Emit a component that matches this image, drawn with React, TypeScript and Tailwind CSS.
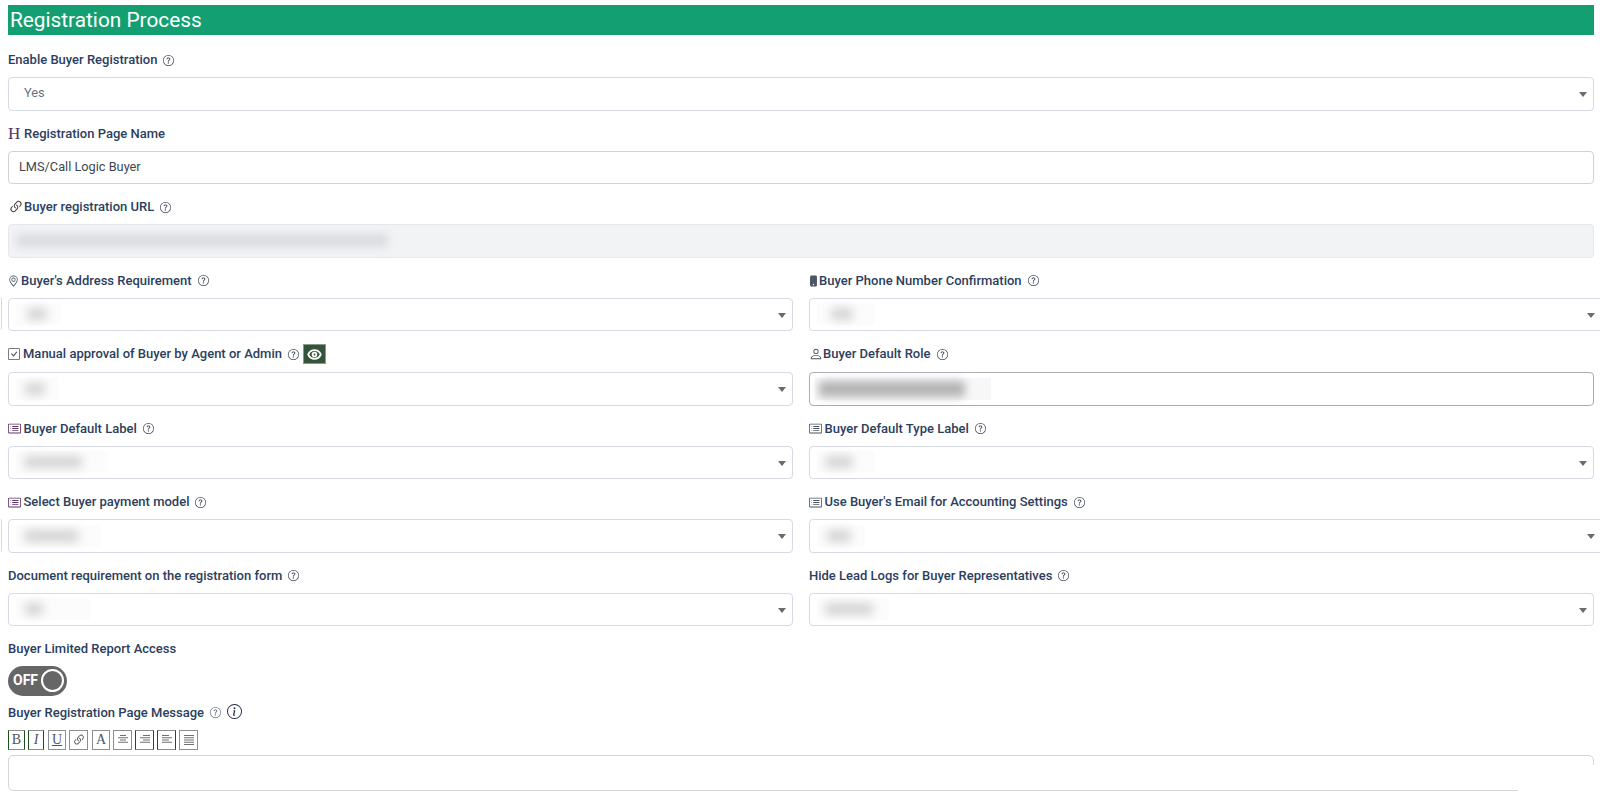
import type { ReactNode } from "react"
import {
  BsCardList,
  BsCheckSquare,
  BsGeoAlt,
  BsInfoCircle,
  BsLink45Deg,
  BsPerson,
  BsPhoneFill,
  BsQuestionCircle,
} from "react-icons/bs"
import { Eye } from "lucide-react"

const labelText = "flex h-4 items-center whitespace-nowrap text-[13px] leading-4 font-medium text-[#2c3e5d]"

function Label({ icon, text, help = true, extra }: { icon?: ReactNode; text: string; help?: boolean; extra?: ReactNode }) {
  return (
    <div className={`mb-[9px] ${labelText}`}>
      {icon}
      <span>{text}</span>
      {help && <BsQuestionCircle className="ml-[6px] h-[11px] w-[11px] shrink-0 text-[#3f4a5a]" />}
      {extra}
    </div>
  )
}

// stands in for the values that are blurred out in the picture
function Smudge({ width, core, offset = 8, dark }: { width: number; core: number; offset?: number; dark?: boolean }) {
  return (
    <div className={`flex h-[22px] items-center ${dark ? "bg-[#f7f7f7]" : "bg-[#fcfcfc]"}`} style={{ width }}>
      <div
        className={dark ? "h-[16px] rounded-sm bg-[#b4b4b4] blur-[4px]" : "h-[12px] rounded-sm bg-[#d4d4d4] blur-[5px]"}
        style={{ width: core, marginLeft: offset }}
      />
    </div>
  )
}

function Select({ children, over }: { children?: ReactNode; over?: boolean }) {
  return (
    <div
      className={`relative flex h-[33.5px] items-center rounded-[4px] border border-[#d7d9e4] bg-white pl-[7px] text-[12.75px] text-[#6b7280] ${
        over ? "mr-[-12px]" : ""
      }`}
    >
      {children}
      <div
        className={`absolute top-[14px] ${over ? "right-[10px]" : "right-[6px]"} h-0 w-0 border-x-[4px] border-t-[5px] border-x-transparent border-t-[#6b6b6b]`}
      />
    </div>
  )
}

function Field({ children }: { children: ReactNode }) {
  return <div className="mb-[15px]">{children}</div>
}

const ListIcon = ({ color = "text-[#4b5563]" }: { color?: string }) => (
  <BsCardList className={`mr-[2.5px] h-[13px] w-[13px] shrink-0 ${color}`} />
)

function Lines({ rows }: { rows: [number, number][] }) {
  return (
    <svg viewBox="0 0 12 12" className="h-[12px] w-[12px]" stroke="#6f6f6f" strokeWidth="1">
      {rows.map(([x1, x2], i) => (
        <line key={i} x1={x1} x2={x2} y1={1.5 + i * 2.25} y2={1.5 + i * 2.25} />
      ))}
    </svg>
  )
}

function ToolButton({ width, green, children }: { width: string; green?: boolean; children: ReactNode }) {
  return (
    <div
      className={`flex h-[20px] items-center justify-center border bg-white font-['Liberation_Serif',serif] text-[14px] text-[#4f5560] ${width} ${
        green ? "border-[#8a8f8a] border-l-[#1f4d1f] border-r-[#1f4d1f]" : "border-[#8c8f8f]"
      }`}
    >
      {children}
    </div>
  )
}

export default function App() {
  return (
    <div className="relative h-[797px] overflow-hidden bg-white pt-[5px] pr-[6px] pl-2 font-['Roboto',sans-serif]">
      <div className="mb-[17.5px] flex h-[29.5px] items-center bg-[#149f72] pt-[2px] pl-[2px] text-[20.8px] text-white">Registration Process</div>

      <Field>
        <Label text="Enable Buyer Registration" />
        <Select>
          <span className="pb-[2px] pl-2">Yes</span>
        </Select>
      </Field>

      <Field>
        <Label
          text="Registration Page Name"
          help={false}
          icon={<span className="mr-[4px] w-[12px] font-['Liberation_Serif',serif] text-[17px] font-normal text-[#4a3560]">H</span>}
        />
        <div className="flex h-[33.5px] items-center rounded-[4px] border border-[#cfd3d8] bg-white pb-[2px] pl-[10px] text-[12.75px] text-[#3f4650]">
          LMS/Call Logic Buyer
        </div>
      </Field>

      <Field>
        <Label text="Buyer registration URL" icon={<BsLink45Deg className="h-[16px] w-[16px] text-[#4b3a3a]" />} />
        <div className="flex h-[33.5px] items-center rounded-[4px] border border-[#e5e7eb] bg-[#f2f3f5] pl-[7px]">
          <div className="h-[13px] w-[372px] rounded-sm bg-[#d9dbdf] blur-[4px]" />
        </div>
      </Field>

      <div className="grid grid-cols-2 gap-x-4">
        <Field>
          <Label text="Buyer's Address Requirement" icon={<BsGeoAlt className="mr-[2px] h-[14px] w-[11px] text-[#2f3a4a]" />} />
          <Select>
            <Smudge width={45} core={20} offset={11} />
          </Select>
        </Field>
        <Field>
          <Label text="Buyer Phone Number Confirmation" icon={<BsPhoneFill className="-ml-px h-[14px] w-[11px] text-[#4b5563]" />} />
          <Select over>
            <Smudge width={58} core={22} offset={14} />
          </Select>
        </Field>

        <Field>
          <Label
            text="Manual approval of Buyer by Agent or Admin"
            icon={<BsCheckSquare className="mr-[3px] h-[12px] w-[12px] text-[#4b5563]" />}
            extra={
              <span className="ml-[4px] flex h-5 w-[23px] items-center justify-center border border-[#8a9a8a] bg-[#35533a]">
                <Eye className="h-[15px] w-[15px] text-white" strokeWidth={3} />
              </span>
            }
          />
          <div className="h-px" />
          <Select>
            <Smudge width={42} core={20} offset={9} />
          </Select>
        </Field>
        <Field>
          <Label text="Buyer Default Role" icon={<BsPerson className="h-[14px] w-[14px] text-[#4b5563]" />} />
          <div className="h-px" />
          <div className="flex h-[33.5px] items-center rounded-[4px] border border-[#a8adb3] bg-white pl-[5px]">
            <Smudge width={176} core={146} offset={4} dark />
          </div>
        </Field>

        <Field>
          <Label text="Buyer Default Label" icon={<ListIcon color="text-[#5c3566]" />} />
          <Select>
            <Smudge width={92} core={58} offset={8} />
          </Select>
        </Field>
        <Field>
          <Label text="Buyer Default Type Label" icon={<ListIcon />} />
          <Select>
            <Smudge width={58} core={28} offset={8} />
          </Select>
        </Field>

        <Field>
          <Label text="Select Buyer payment model" icon={<ListIcon color="text-[#5c3566]" />} />
          <Select>
            <Smudge width={85} core={55} offset={8} />
          </Select>
        </Field>
        <Field>
          <Label text="Use Buyer's Email for Accounting Settings" icon={<ListIcon />} />
          <Select over>
            <Smudge width={48} core={24} offset={10} />
          </Select>
        </Field>

        <Field>
          <Label text="Document requirement on the registration form" />
          <Select>
            <Smudge width={74} core={18} offset={9} />
          </Select>
        </Field>
        <Field>
          <Label text="Hide Lead Logs for Buyer Representatives" />
          <Select>
            <Smudge width={72} core={48} offset={8} />
          </Select>
        </Field>
      </div>

      <Label text="Buyer Limited Report Access" help={false} />
      <div className="relative mb-[9px] flex h-[29.5px] w-[59px] items-center rounded-full bg-[#666666] pl-[5px] text-[14px] font-bold text-white">
        OFF
        <div className="absolute top-[3px] right-[3px] h-[23px] w-[23px] rounded-full border-2 border-white bg-[#666666]" />
      </div>

      <div className={`mb-[9px] ${labelText}`}>
        <span>Buyer Registration Page Message</span>
        <BsQuestionCircle className="ml-[6px] h-[11px] w-[11px] text-[#6b7280]" />
        <BsInfoCircle className="mb-[2px] ml-[6px] h-[15px] w-[15px] text-[#1f2a44]" />
      </div>

      <div className="mb-[5px] flex gap-[3px]">
        <ToolButton width="w-[17px]" green>B</ToolButton>
        <ToolButton width="w-[16px]" green><i>I</i></ToolButton>
        <ToolButton width="ml-[1px] w-[18px]"><u>U</u></ToolButton>
        <ToolButton width="w-[19px]">
          <BsLink45Deg className="h-[14px] w-[14px]" />
        </ToolButton>
        <ToolButton width="ml-[1px] w-[18px]">A</ToolButton>
        <ToolButton width="w-[19px]"><Lines rows={[[3, 9], [1, 11], [3, 9], [1, 11]]} /></ToolButton>
        <ToolButton width="w-[19px]" green><Lines rows={[[4, 11], [1, 11], [4, 11], [1, 11]]} /></ToolButton>
        <ToolButton width="w-[19px]" green><Lines rows={[[1, 8], [1, 11], [1, 8], [1, 11]]} /></ToolButton>
        <ToolButton width="w-[19px]"><Lines rows={[[1, 11], [1, 11], [1, 11], [1, 11], [1, 11]]} /></ToolButton>
      </div>

      <div className="relative h-[36px] rounded-[5px] border border-[#d3d6dc] bg-white">
        <div className="absolute right-[-2px] bottom-[-3px] h-[28px] w-[77px] bg-white" />
      </div>

      {/* slivers of the neighbouring column at the left page edge */}
      <div className="absolute top-[297px] left-0 h-[33px] w-[2px] rounded-r-sm border-r border-[#d7d9e4]" />
      <div className="absolute top-[519px] left-0 h-[33px] w-[2px] rounded-r-sm border-r border-[#d7d9e4]" />
    </div>
  )
}
